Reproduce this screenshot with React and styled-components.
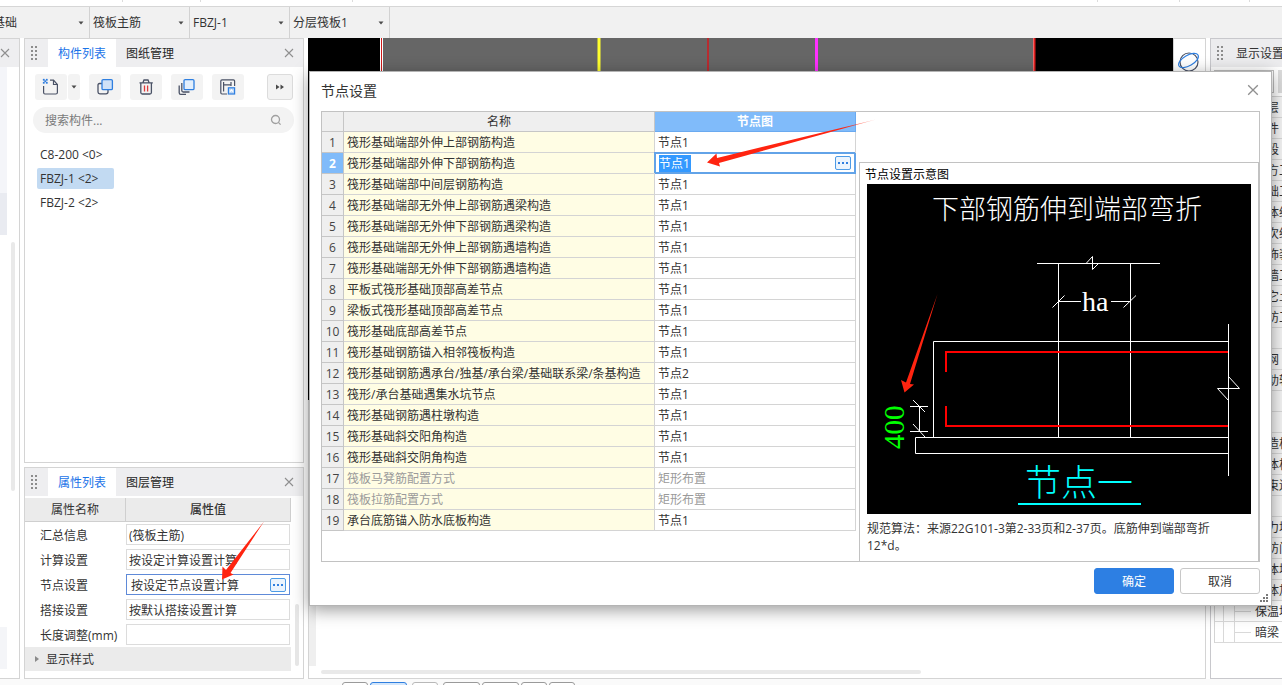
import React, { useState } from 'react';
import styled, { createGlobalStyle } from 'styled-components';

const GlobalStyle = createGlobalStyle`
  * {
    box-sizing: border-box;
  }

  body {
    margin: 0;
    background: #ffffff;
    color: #333333;
  }

  body, button, input, select, table {
    font-family: 'Open Sans', 'Noto Sans CJK SC', sans-serif;
    font-size: 12px;
  }
`;

const combos = ['基础', '筏板主筋', 'FBZJ-1', '分层筏板1'];

const components = ['C8-200 <0>', 'FBZJ-1 <2>', 'FBZJ-2 <2>'];

const properties = [
  { name: '汇总信息', value: '(筏板主筋)' },
  { name: '计算设置', value: '按设定计算设置计算' },
  { name: '节点设置', value: '按设定节点设置计算', active: true },
  { name: '搭接设置', value: '按默认搭接设置计算' },
  { name: '长度调整(mm)', value: '' },
];

const nodes = [
  { name: '筏形基础端部外伸上部钢筋构造', value: '节点1' },
  { name: '筏形基础端部外伸下部钢筋构造', value: '节点1' },
  { name: '筏形基础端部中间层钢筋构造', value: '节点1' },
  { name: '筏形基础端部无外伸上部钢筋遇梁构造', value: '节点1' },
  { name: '筏形基础端部无外伸下部钢筋遇梁构造', value: '节点1' },
  { name: '筏形基础端部无外伸上部钢筋遇墙构造', value: '节点1' },
  { name: '筏形基础端部无外伸下部钢筋遇墙构造', value: '节点1' },
  { name: '平板式筏形基础顶部高差节点', value: '节点1' },
  { name: '梁板式筏形基础顶部高差节点', value: '节点1' },
  { name: '筏形基础底部高差节点', value: '节点1' },
  { name: '筏形基础钢筋锚入相邻筏板构造', value: '节点1' },
  { name: '筏形基础钢筋遇承台/独基/承台梁/基础联系梁/条基构造', value: '节点2' },
  { name: '筏形/承台基础遇集水坑节点', value: '节点1' },
  { name: '筏形基础钢筋遇柱墩构造', value: '节点1' },
  { name: '筏形基础斜交阳角构造', value: '节点1' },
  { name: '筏形基础斜交阴角构造', value: '节点1' },
  { name: '筏板马凳筋配置方式', value: '矩形布置', disabled: true },
  { name: '筏板拉筋配置方式', value: '矩形布置', disabled: true },
  { name: '承台底筋锚入防水底板构造', value: '节点1' },
];

const layers = [
  '楼层', '构件', '阶段', '土方工程', '基础工程', '主体结构', '二次结构', '装饰装修',
  '幕墙工程', '其它土建', '人防工程', '', '轴网', '辅助轴线', '', '', '构造柱', '砌体柱',
  '约束边缘', '', '剪力墙', '人防门', '砌体墙', '砌体加筋', '保温墙', '暗梁',
];

const statusButtons = [
  { width: 26 },
  { width: 37, active: true },
  { width: 26 },
  { width: 37 },
  { width: 37 },
  { width: 26 },
  { width: 26 },
];

const Grip = () => (
  <GripSvg width="8" height="16" viewBox="0 0 8 16" fill="#8c8c8c">
    {[0, 4, 8, 12].map((y) => (
      <React.Fragment key={y}>
        <rect x="0" y={y + 1} width="2" height="2" />
        <rect x="4" y={y + 1} width="2" height="2" />
      </React.Fragment>
    ))}
  </GripSvg>
);

const Cross = ({ size = 10 }) => (
  <svg width={size} height={size} viewBox="0 0 10 10" fill="none" stroke="#8f8f8f" strokeWidth="1.1">
    <path d="M1 1 L9 9 M9 1 L1 9" />
  </svg>
);

const Caret = () => (
  <svg width="6" height="4" viewBox="0 0 6 4" fill="#4a4a4a">
    <path d="M0.5 0.5 H5.5 L3 3.5 Z" />
  </svg>
);

const NewIcon = () => (
  <svg width="18" height="18" viewBox="0 0 18 18" fill="none" stroke="#4a5266" strokeWidth="1.2">
    <path d="M1.6 8 V14.5 Q1.6 16 3 16 H13.8 Q15.4 16 15.4 14.5 V6.5 L11.5 2.2 H8" />
    <path d="M11.5 2.2 V6.5 H15.4" />
    <path d="M1 1 H2.5 V2.5 H1 Z M4 1 H5.5 V2.5 H4 Z M2.5 2.5 H4 V4 H2.5 Z M1 4 H2.5 V5.5 H1 Z M4 4 H5.5 V5.5 H4 Z" fill="#2f7fe0" stroke="#2f7fe0" strokeWidth="0.3" />
  </svg>
);

const CopyIcon = () => (
  <svg width="18" height="18" viewBox="0 0 18 18" fill="none" strokeWidth="1.3">
    <path d="M6 5.5 H3.5 Q2 5.5 2 7 V14 Q2 15.8 3.8 15.8 H10 Q12 15.8 12 14 V12" stroke="#4a5266" />
    <rect x="6" y="1.6" width="10.4" height="10" rx="1.2" fill="#cfe1f7" stroke="#2f7fe0" />
  </svg>
);

const TrashIcon = () => (
  <svg width="18" height="18" viewBox="0 0 18 18" fill="none" stroke="#4a5266" strokeWidth="1.3">
    <path d="M2.5 4.8 H15.8 M6 4.5 L7 2 H11 L12 4.5" />
    <path d="M3.8 5 V14.5 Q3.8 16 5.3 16 H12.9 Q14.4 16 14.4 14.5 V5" />
    <path d="M7.5 7.5 V13.5 M10.6 7.5 V13.5" stroke="#e03a3a" />
  </svg>
);

const LayersIcon = () => (
  <svg width="18" height="18" viewBox="0 0 18 18" fill="none" strokeWidth="1.3">
    <rect x="6" y="1.6" width="10" height="10" rx="1.2" fill="#e3effc" stroke="#2f7fe0" />
    <path d="M3.8 5 V12.5 Q3.8 14 5.2 14 H11.5" stroke="#4a5266" />
    <path d="M1.2 7.5 V14.8 Q1.2 16.4 2.8 16.4 H8" stroke="#4a5266" />
  </svg>
);

const SaveIcon = () => (
  <svg width="18" height="18" viewBox="0 0 18 18" fill="none" stroke="#4a5266" strokeWidth="1.2">
    <path d="M8 16 H3 Q1.8 16 1.8 14.8 V3 Q1.8 1.8 3 1.8 H14.4 Q15.6 1.8 15.6 3 V8" />
    <path d="M4.6 4 V13.5 M4.6 6.8 H12 M12 4 V8" />
    <rect x="9.4" y="9.8" width="6.2" height="6.2" fill="#b9d4f5" stroke="#2f7fe0" />
    <path d="M11 13.6 L12.5 12 L14 13.6" stroke="#ffffff" />
  </svg>
);

const MoreIcon = () => (
  <svg width="10" height="6" viewBox="0 0 10 6" fill="#4a4a4a">
    <path d="M1 0.5 L4.5 3 L1 5.5 Z M5.5 0.5 L9 3 L5.5 5.5 Z" />
  </svg>
);

const SearchIcon = () => (
  <svg width="12" height="12" viewBox="0 0 12 12" fill="none" stroke="#a0a0a0" strokeWidth="1.3">
    <circle cx="5.5" cy="5.5" r="4" />
    <path d="M8.4 8.4 L10.6 10.6" />
  </svg>
);

const OrbitIcon = () => (
  <svg width="24" height="24" viewBox="0 0 24 24" fill="none" strokeWidth="1.2">
    <circle cx="12" cy="13" r="9" stroke="#4a5266" />
    <ellipse cx="11.5" cy="11.5" rx="11" ry="5.2" stroke="#2f7fe0" transform="rotate(-30 11.5 11.5)" />
  </svg>
);

const CadView = () => (
  <svg width="100%" height="100%" viewBox="0 0 865 365" preserveAspectRatio="xMinYMin slice">
    <rect width="865" height="365" fill="#000000" />
    <rect x="72" y="0" width="655" height="365" fill="#666666" />
    <path d="M72.5 0 V365" stroke="#ffffff" />
    <path d="M73.5 0 V365" stroke="#d01818" />
    <path d="M74.5 0 V365" stroke="#ffffff" />
    <path d="M291 0 V365" stroke="#ffff2e" strokeWidth="3" />
    <path d="M400 0 V365" stroke="#b82c30" strokeWidth="2" />
    <path d="M508.5 0 V365" stroke="#ff30ff" strokeWidth="3" />
    <path d="M725.5 0 V365" stroke="#ffb0b0" />
    <path d="M726.5 0 V365" stroke="#e02020" strokeWidth="2" />
  </svg>
);

// Section of the raft edge, drawn for the node that is picked in the table
const NodeDiagram = () => (
  <DiagramSvg viewBox="0 0 384 330" fill="none" stroke="#ffffff">
    <rect width="384" height="330" fill="#000000" stroke="none" />
    <DiagramText x="65" y="35" size={27}>下部钢筋伸到端部弯折</DiagramText>
    <path d="M170 79.5 H293" />
    <path d="M219.5 79 L225.5 72.5 V85.5 L231 80" />
    <path d="M191.5 79.5 V253.5 M263.5 79.5 V253.5" />
    <path d="M191.5 117.5 H214 M244 117.5 H263.5" />
    <path d="M185.5 123.5 L197.5 111.5 M256.5 123.5 L269 111.5" />
    <DiagramText x="215" y="127" size={28}>ha</DiagramText>
    <path d="M361.5 157.5 H66.5 V253.5" />
    <path d="M361.5 253.5 H48.5 V269.5 H361.5" />
    <path d="M361.5 140 V292" />
    <path d="M361.5 192.5 L372.5 204.5 H350.5 L361.5 216.5" />
    <path d="M361 168 H79 V188 M79 222 V242 H361" stroke="#ff0000" strokeWidth="2" />
    <path d="M43 222.5 H61 M43 247.5 H61 M52.5 222.5 V247.5" />
    <path d="M46 216 L58 228 M46 240 L58 253" />
    <DiagramText size={29} color="#00ff00" transform="translate(37 265) rotate(-90)">400</DiagramText>
    <DiagramText x="158" y="312" size={36} color="#00ffff">节点一</DiagramText>
    <path d="M151 320 H274" stroke="#00ffff" strokeWidth="2" />
    <path d="M37.5 208.5 L34 196 L39 198.5 L70.5 110 L43 200 L47 200.5 Z" fill="#ff2410" stroke="none" />
  </DiagramSvg>
);

const EllipsisButton = ({ label }) => (
  <Ellipsis type="button" aria-label={label}>
    <svg width="10" height="2" viewBox="0 0 10 2" fill="#2f7fe0">
      <rect x="0" width="2" height="2" />
      <rect x="4" width="2" height="2" />
      <rect x="8" width="2" height="2" />
    </svg>
  </Ellipsis>
);

const PanelHeader = ({ tabs }) => (
  <PanelBar>
    <GripBox><Grip /></GripBox>
    {tabs.map((tab, i) => (
      <PanelTab key={tab} type="button" $active={i === 0}>{tab}</PanelTab>
    ))}
    <CloseButton type="button" aria-label="关闭"><Cross /></CloseButton>
  </PanelBar>
);

const NodeDialog = () => {
  const [editing, setEditing] = useState('节点1');

  return (
    <Dialog role="dialog" aria-labelledby="node-title">
      <DialogHeader>
        <DialogTitle id="node-title">节点设置</DialogTitle>
        <CloseButton type="button" aria-label="关闭"><Cross size={12} /></CloseButton>
      </DialogHeader>
      <DialogBody>
        <NodeTable>
          <colgroup>
            <col width="22" />
            <col width="311" />
            <col width="201" />
          </colgroup>
          <thead>
            <tr>
              <HeadCell />
              <HeadCell>名称</HeadCell>
              <HeadCell $active>节点图</HeadCell>
            </tr>
          </thead>
          <tbody>
            {nodes.map((node, i) => (
              <tr key={node.name}>
                <IndexCell $active={i === 1}>{i + 1}</IndexCell>
                <NameCell $muted={node.disabled}>{node.name}</NameCell>
                {i === 1 ? (
                  <EditCell>
                    <EditBox>
                      <EditInput
                        aria-label="节点图"
                        value={editing}
                        onChange={(e) => setEditing(e.target.value)}
                      />
                      <EllipsisButton label="选择节点图" />
                    </EditBox>
                  </EditCell>
                ) : (
                  <ValueCell $muted={node.disabled}>{node.value}</ValueCell>
                )}
              </tr>
            ))}
          </tbody>
        </NodeTable>
        <Preview>
          <PreviewTitle>节点设置示意图</PreviewTitle>
          <NodeDiagram />
          <PreviewNote>规范算法：来源22G101-3第2-33页和2-37页。底筋伸到端部弯折12*d。</PreviewNote>
        </Preview>
      </DialogBody>
      <DialogFooter>
        <DialogButton type="button" $primary>确定</DialogButton>
        <DialogButton type="button">取消</DialogButton>
      </DialogFooter>
      <TableArrow width="170" height="50" viewBox="0 0 170 50">
        <defs>
          <linearGradient id="tail" x1="0" x2="1" y1="0" y2="0">
            <stop offset="0.8" stopColor="#ff2410" />
            <stop offset="1" stopColor="#ff2410" stopOpacity="0.3" />
          </linearGradient>
        </defs>
        <path d="M0 43.5 L9.5 34.5 L10 39 L169 0.5 L12 44 L13 47.5 Z" fill="url(#tail)" />
      </TableArrow>
      <ResizeGrip width="9" height="9" viewBox="0 0 9 9" fill="#7a7a7a">
        <rect x="6" y="0" width="2" height="2" />
        <rect x="3" y="3" width="2" height="2" />
        <rect x="6" y="3" width="2" height="2" />
        <rect x="0" y="6" width="2" height="2" />
        <rect x="3" y="6" width="2" height="2" />
        <rect x="6" y="6" width="2" height="2" />
      </ResizeGrip>
    </Dialog>
  );
};

const App = () => (
  <>
    <GlobalStyle />
    <Page>
      <Ribbon>
        {[123, 78, 152, 745, 82, 70].map((w) => (
          <RibbonGroup key={w} $width={w} />
        ))}
      </Ribbon>
      <ComboBar>
        {combos.map((text) => (
          <Combo key={text}>
            <ComboSelect aria-label={text} defaultValue={text}>
              <option>{text}</option>
            </ComboSelect>
            <ComboArrow><Caret /></ComboArrow>
          </Combo>
        ))}
      </ComboBar>

      <Main>
        <NavPanel>
          <NavHeader>
            <CloseButton type="button" aria-label="关闭"><Cross /></CloseButton>
          </NavHeader>
          <NavBody>
            <NavTree>
              <NavBlock $grow={126} $color="#f4f5f9" />
              <NavBlock $grow={42} $color="#e9ebf1" />
              <NavBlock $grow={392} $color="#ffffff" />
              <NavBlock $grow={42} $color="#f4f5f8" />
              <NavBlock $grow={9} $color="#ffffff" />
            </NavTree>
            <NavScroll />
          </NavBody>
        </NavPanel>

        <SideColumn>
          <Panel $grow>
            <PanelHeader tabs={['构件列表', '图纸管理']} />
            <ToolRow>
              <SplitTool>
                <ToolButton type="button" aria-label="新建"><NewIcon /></ToolButton>
                <SplitArrow type="button" aria-label="新建选项"><Caret /></SplitArrow>
              </SplitTool>
              <ToolButton type="button" aria-label="复制"><CopyIcon /></ToolButton>
              <ToolButton type="button" aria-label="删除"><TrashIcon /></ToolButton>
              <ToolButton type="button" aria-label="层间复制"><LayersIcon /></ToolButton>
              <ToolButton type="button" aria-label="存档"><SaveIcon /></ToolButton>
              <MoreButton type="button" aria-label="更多"><MoreIcon /></MoreButton>
            </ToolRow>
            <SearchBox>
              <SearchInput type="text" aria-label="搜索构件" placeholder="搜索构件..." />
              <SearchIcon />
            </SearchBox>
            <ComponentList>
              {components.map((item, i) => (
                <ComponentItem key={item} $active={i === 1}>{item}</ComponentItem>
              ))}
            </ComponentList>
          </Panel>

          <Panel>
            <PanelHeader tabs={['属性列表', '图层管理']} />
            <PropArea>
              <PropSheet>
                <PropHead>
                  <PropHeadCell>属性名称</PropHeadCell>
                  <PropHeadCell $bold>属性值</PropHeadCell>
                </PropHead>
                {properties.map((prop, i) => (
                  <PropRow key={prop.name}>
                    <PropLabel htmlFor={`prop-${i}`}>{prop.name}</PropLabel>
                    <PropField $active={prop.active}>
                      <PropInput id={`prop-${i}`} type="text" defaultValue={prop.value} />
                      {prop.active && <EllipsisButton label="打开节点设置" />}
                    </PropField>
                  </PropRow>
                ))}
                <PropGroup>
                  <svg width="4" height="6" viewBox="0 0 4 6" fill="#8a8a8a"><path d="M0 0 L4 3 L0 6 Z" /></svg>
                  显示样式
                </PropGroup>
              </PropSheet>
              <PropScroll />
              <PropArrow width="44" height="60" viewBox="0 0 44 60">
                <path d="M1 58.5 L1.5 45.5 L5 49 L43 0.5 L9.5 52 L12.5 53.5 Z" fill="#ff2410" />
              </PropArrow>
            </PropArea>
          </Panel>
        </SideColumn>

        <Workspace>
          <WorkTop>
            <CadArea><CadView /></CadArea>
            <ViewTools>
              <OrbitButton type="button" aria-label="动态观察"><OrbitIcon /></OrbitButton>
            </ViewTools>
          </WorkTop>
          <WorkBottom>
            <WorkGutter />
            <WorkScroll />
          </WorkBottom>
        </Workspace>

        <DisplayPanel>
          <DisplayHeader>
            <Grip />
            显示设置
          </DisplayHeader>
          <DisplayTabs>
            <DisplayTab $active />
            <DisplayTab />
          </DisplayTabs>
          <LayerTree>
            {layers.map((layer, i) => (
              <LayerRow key={i} $shaded={i < 24}>
                {i > 23 && <TreeLine />}
                {layer}
              </LayerRow>
            ))}
          </LayerTree>
        </DisplayPanel>
      </Main>

      <StatusBar>
        {statusButtons.map((b, i) => (
          <StatusButton key={i} type="button" aria-label={`视图 ${i + 1}`} $width={b.width} $active={b.active} />
        ))}
      </StatusBar>

      <NodeDialog />
    </Page>
  </>
);

const GripSvg = styled.svg`
  flex: none;
`;

const Page = styled.div`
  position: relative;
  display: flex;
  flex-direction: column;
  height: 100vh;
  overflow: hidden;
`;

const Ribbon = styled.div`
  display: flex;
  flex: none;
  height: 7px;
  padding-bottom: 4px;
  border-bottom: 1px solid #d6d6d6;
`;

const RibbonGroup = styled.div`
  flex: none;
  width: ${({ $width }) => $width}px;
  border-right: 1px solid #dcdcdc;
`;

const ComboBar = styled.div`
  display: flex;
  flex: none;
  height: 31px;
  margin-left: -10px;
  background: #f1f1f1;
`;

const Combo = styled.div`
  position: relative;
  width: 100px;
  border-right: 1px solid #d2d2d2;
`;

const ComboSelect = styled.select`
  width: 100%;
  height: 100%;
  padding: 0 20px 0 3px;
  appearance: none;
  border: none;
  outline: none;
  background: transparent;
  color: #333333;
`;

const ComboArrow = styled.span`
  position: absolute;
  top: 0;
  right: 5px;
  display: flex;
  align-items: center;
  height: 100%;
  pointer-events: none;
`;

const Main = styled.main`
  display: flex;
  flex: 1;
  min-height: 0;
  gap: 4px;
`;

const CloseButton = styled.button`
  display: flex;
  flex: none;
  align-items: center;
  justify-content: center;
  width: 20px;
  height: 20px;
  margin-left: auto;
  padding: 0;
  border: none;
  background: none;
`;

const NavPanel = styled.aside`
  display: flex;
  flex-direction: column;
  flex: none;
  width: 20px;
  border: 1px solid #d4d4d4;
  border-left: none;
`;

const NavHeader = styled.div`
  display: flex;
  align-items: center;
  justify-content: flex-end;
  flex: none;
  height: 28px;
  padding-right: 4px;
  background: #eeeef0;
`;

const NavBody = styled.div`
  display: flex;
  flex: 1;
  gap: 4px;
`;

const NavTree = styled.div`
  display: flex;
  flex-direction: column;
  width: 7px;
`;

const NavBlock = styled.div`
  flex: ${({ $grow }) => $grow};
  background: ${({ $color }) => $color};
`;

const NavScroll = styled.div`
  width: 4px;
  height: 249px;
  margin-top: 175px;
  border-radius: 2px;
  background: #e9e9e9;
`;

const SideColumn = styled.div`
  display: flex;
  flex-direction: column;
  flex: none;
  gap: 4px;
  width: 280px;
`;

const Panel = styled.section`
  flex: ${({ $grow }) => ($grow ? '1' : 'none')};
  border: 1px solid #d4d4d4;
  background: #ffffff;
`;

const PanelBar = styled.div`
  display: flex;
  align-items: center;
  height: 28px;
  padding-right: 4px;
  background: #eeeef0;
`;

const GripBox = styled.div`
  display: flex;
  justify-content: center;
  width: 23px;
  padding-right: 3px;
`;

const PanelTab = styled.button`
  height: 28px;
  padding: 0 10px;
  border: none;
  background: ${({ $active }) => ($active ? '#ffffff' : 'transparent')};
  color: ${({ $active }) => ($active ? '#1a73e8' : '#262626')};
`;

const ToolRow = styled.div`
  display: flex;
  gap: 9px;
  padding: 7px 10px;
`;

const SplitTool = styled.div`
  display: flex;
  gap: 1px;
`;

const ToolButton = styled.button`
  display: flex;
  align-items: center;
  justify-content: center;
  width: 32px;
  height: 26px;
  padding: 0;
  border: none;
  border-radius: 3px;
  background: #f3f3f3;
`;

const SplitArrow = styled(ToolButton)`
  width: 12px;
`;

const MoreButton = styled(ToolButton)`
  width: 26px;
  margin-left: auto;
  border: 1px solid #dcdcdc;
`;

const SearchBox = styled.div`
  display: flex;
  align-items: center;
  height: 26px;
  margin: 0 9px 0 8px;
  padding: 0 12px;
  border-radius: 13px;
  background: #f3f3f3;
`;

const SearchInput = styled.input`
  flex: 1;
  min-width: 0;
  padding: 0;
  border: none;
  outline: none;
  background: transparent;

  &::placeholder {
    color: #7a7a7a;
  }
`;

const ComponentList = styled.ul`
  display: flex;
  flex-direction: column;
  align-items: flex-start;
  gap: 3px;
  margin: 0;
  padding: 11px 12px;
  list-style: none;
`;

const ComponentItem = styled.li`
  min-width: 77px;
  height: 21px;
  padding: 0 8px 0 3px;
  border-radius: 2px;
  background: ${({ $active }) => ($active ? '#c2daf2' : 'transparent')};
  color: #333333;
  line-height: 21px;
`;

const PropArea = styled.div`
  position: relative;
  display: flex;
  gap: 4px;
  padding: 2px 4px 7px 0;
`;

const PropSheet = styled.div`
  flex: 1;
  min-width: 0;
`;

const PropHead = styled.div`
  display: flex;
  height: 24px;
  border-right: 1px solid #cfcfcf;
  border-bottom: 1px solid #cfcfcf;
  background: #ebebeb;
`;

const PropHeadCell = styled.div`
  flex: ${({ $bold }) => ($bold ? '1' : '0 0 101px')};
  border-right: ${({ $bold }) => ($bold ? 'none' : '1px solid #cfcfcf')};
  font-weight: ${({ $bold }) => ($bold ? '500' : '400')};
  line-height: 24px;
  text-align: center;
`;

const PropRow = styled.div`
  display: flex;
  align-items: center;
  height: 25px;
`;

const PropLabel = styled.label`
  flex: 0 0 101px;
  padding-left: 15px;
  white-space: nowrap;
`;

const PropField = styled.div`
  display: flex;
  align-items: center;
  flex: 1;
  min-width: 0;
  height: 21px;
  margin-right: 1px;
  padding: 0 3px 0 ${({ $active }) => ($active ? '4px' : '2px')};
  border: 1px solid ${({ $active }) => ($active ? '#5f8ad8' : '#dcdcdc')};
`;

const PropInput = styled.input`
  flex: 1;
  min-width: 0;
  height: 19px;
  padding: 0;
  border: none;
  outline: none;
  background: transparent;
  color: #333333;
`;

const PropGroup = styled.div`
  display: flex;
  align-items: center;
  gap: 7px;
  height: 24px;
  padding-left: 10px;
  background: #ebebeb;
`;

const PropScroll = styled.div`
  flex: none;
  align-self: flex-end;
  width: 4px;
  height: 62px;
  margin-bottom: 5px;
  border-radius: 2px;
  background: #e6e6e6;
`;

const PropArrow = styled.svg`
  position: absolute;
  top: 25px;
  left: 196px;
  pointer-events: none;
`;

const Ellipsis = styled.button`
  display: flex;
  align-items: center;
  justify-content: center;
  flex: none;
  width: 16px;
  height: 14px;
  margin-left: auto;
  padding: 0;
  border: 1px solid #4d9be6;
  border-radius: 2px;
  background: #ebf4fd;
`;

const Workspace = styled.section`
  display: flex;
  flex-direction: column;
  flex: 1;
  min-width: 0;
`;

const WorkTop = styled.div`
  display: flex;
  flex: 365;
  min-height: 0;
`;

const CadArea = styled.div`
  flex: 1;
  min-width: 0;
  overflow: hidden;
`;

const ViewTools = styled.div`
  flex: none;
  width: 33px;
  border: 1px solid #d4d4d4;
  border-bottom: none;
`;

const OrbitButton = styled.button`
  display: block;
  width: 30px;
  padding: 10px 3px;
  border: none;
  background: none;
`;

const WorkBottom = styled.div`
  display: flex;
  align-items: flex-end;
  gap: 5px;
  flex: 276;
  padding-bottom: 4px;
  border: 1px solid #d4d4d4;
  border-top: none;
`;

const WorkGutter = styled.div`
  align-self: stretch;
  width: 7px;
  margin-bottom: 8px;
  background: #efefef;
`;

const WorkScroll = styled.div`
  width: 67%;
  height: 4px;
  border-radius: 2px;
  background: #e9e9e9;
`;

const DisplayPanel = styled.aside`
  flex: none;
  width: 72px;
  overflow: hidden;
  border: 1px solid #c8c8cc;
  border-right: none;
`;

const DisplayHeader = styled.div`
  display: flex;
  align-items: center;
  gap: 11px;
  height: 28px;
  padding-left: 6px;
  background: #ececee;
  white-space: nowrap;
`;

const DisplayTabs = styled.div`
  display: flex;
  gap: 4px;
  height: 29px;
  padding: 3px 0 3px 3px;
`;

const DisplayTab = styled.div`
  flex: none;
  width: ${({ $active }) => ($active ? '60px' : '40px')};
  border: ${({ $active }) => ($active ? '1px solid #bdbdbd' : 'none')};
  background: ${({ $active }) => ($active ? '#ffffff' : '#dcdcdc')};
`;

const LayerTree = styled.div`
  margin-left: 3px;
  border-top: 1px solid #d4d4d4;
  border-left: 1px solid #d4d4d4;
`;

const LayerRow = styled.div`
  display: flex;
  align-items: center;
  height: 21px;
  padding-left: ${({ $shaded }) => ($shaded ? '40px' : '8px')};
  border-bottom: 1px solid #d9d9d9;
  background: ${({ $shaded }) => ($shaded ? '#f6f6f6' : '#ffffff')};
  white-space: nowrap;
`;

const TreeLine = styled.span`
  flex: none;
  align-self: stretch;
  width: 28px;
  margin-right: 4px;
  border-left: 1px solid #d9d9d9;
  background: linear-gradient(#d9d9d9, #d9d9d9) 100% 50% / 16px 1px no-repeat,
    linear-gradient(#d9d9d9, #d9d9d9) 10px 0 / 1px 100% no-repeat;
`;

const StatusBar = styled.footer`
  display: flex;
  gap: 2px;
  flex: none;
  height: 6px;
  padding: 3px 0 0 342px;
  overflow: hidden;
  background: #fafafa;
`;

const StatusButton = styled.button`
  flex: none;
  width: ${({ $width }) => $width}px;
  height: 20px;
  border: 1px solid ${({ $active }) => ($active ? '#2f7fe0' : '#9a9a9a')};
  border-radius: 3px;
  background: ${({ $active }) => ($active ? '#d3e6fb' : '#ffffff')};

  &:nth-child(3) {
    margin: 0 3px;
    border-color: #b8b8b8;
  }
`;

const Dialog = styled.div`
  position: absolute;
  top: 71px;
  left: 309px;
  right: 10px;
  padding: 0 11px;
  border: 1px solid #b4b4b4;
  background: #ffffff;
  box-shadow: 0 4px 16px rgba(0, 0, 0, 0.4);
`;

const DialogHeader = styled.div`
  display: flex;
  align-items: center;
  height: 39px;
  margin-right: -3px;
  padding-bottom: 3px;
`;

const DialogTitle = styled.h1`
  margin: 0;
  font-size: 14px;
  font-weight: 400;
`;

const DialogBody = styled.div`
  display: flex;
  gap: 3px;
  border: 1px solid #c2c2c2;
`;

const NodeTable = styled.table`
  flex: none;
  align-self: flex-start;
  width: 534px;
  table-layout: fixed;
  border-collapse: separate;
  border-spacing: 0;
  line-height: 18px;
`;

const HeadCell = styled.th`
  height: 20px;
  padding: 1px 0 0;
  border-right: 1px solid ${({ $active }) => ($active ? '#6aaaf0' : '#c6c6c6')};
  border-bottom: 1px solid ${({ $active }) => ($active ? '#6aaaf0' : '#c6c6c6')};
  background: ${({ $active }) => ($active ? '#80bbfa' : '#efefef')};
  color: ${({ $active }) => ($active ? '#ffffff' : '#333333')};
  font-weight: ${({ $active }) => ($active ? '700' : '400')};
`;

const IndexCell = styled.td`
  height: 21px;
  padding: 2px 0 0;
  border-right: 1px solid #c6c6c6;
  border-bottom: 1px solid #c6c6c6;
  background: ${({ $active }) => ($active ? '#80bbfa' : '#efefef')};
  color: ${({ $active }) => ($active ? '#ffffff' : '#444444')};
  font-weight: ${({ $active }) => ($active ? '700' : '400')};
  text-align: center;
`;

const ValueCell = styled.td`
  height: 21px;
  padding: 2px 3px 0;
  border-right: 1px solid #d4d4d4;
  border-bottom: 1px solid #d4d4d4;
  color: ${({ $muted }) => ($muted ? '#9a9a9a' : '#333333')};
  white-space: nowrap;
`;

const NameCell = styled(ValueCell)`
  background: #fffde4;
`;

const EditCell = styled(ValueCell)`
  padding: 0;
  border: none;
`;

const EditBox = styled.div`
  display: flex;
  align-items: center;
  height: 21px;
  padding: 0 3px;
  border: 1px solid #62a3e8;
  border-width: 1px 2px 2px 1px;
  box-shadow: -1px -1px 0 0 #62a3e8;
`;

const EditInput = styled.input`
  width: 32px;
  height: 17px;
  padding: 0;
  border: none;
  outline: none;
  background: #3399ff;
  color: #ffffff;
`;

const Preview = styled.div`
  flex: 1;
  min-width: 0;
  margin-top: 50px;
  padding: 0 7px 7px;
  border: 1px solid #c2c2c2;
  border-bottom: none;
`;

const PreviewTitle = styled.div`
  height: 21px;
  margin-left: -2px;
  color: #000000;
  line-height: 24px;
`;

const PreviewNote = styled.p`
  margin: 6px 0 0;
  padding-right: 24px;
  line-height: 17px;
`;

const DiagramSvg = styled.svg`
  display: block;
  width: 100%;
`;

const DiagramText = styled.text`
  fill: ${({ color }) => color || '#ffffff'};
  stroke: none;
  font-family: 'Liberation Serif', 'Noto Sans CJK SC', serif;
  font-size: ${({ size }) => size}px;
  font-weight: 300;
`;

const DialogFooter = styled.div`
  display: flex;
  justify-content: flex-end;
  gap: 6px;
  padding: 6px 0 11px;
`;

const DialogButton = styled.button`
  width: 80px;
  height: 26px;
  padding: 0;
  border: 1px solid ${({ $primary }) => ($primary ? '#2d7fe3' : '#c8c8c8')};
  border-radius: 3px;
  background: ${({ $primary }) => ($primary ? '#2d7fe3' : '#ffffff')};
  color: ${({ $primary }) => ($primary ? '#ffffff' : '#333333')};
`;

const TableArrow = styled.svg`
  position: absolute;
  top: 47px;
  left: 397px;
  pointer-events: none;
`;

const ResizeGrip = styled.svg`
  position: absolute;
  right: 2px;
  bottom: 2px;
`;

export default App;
